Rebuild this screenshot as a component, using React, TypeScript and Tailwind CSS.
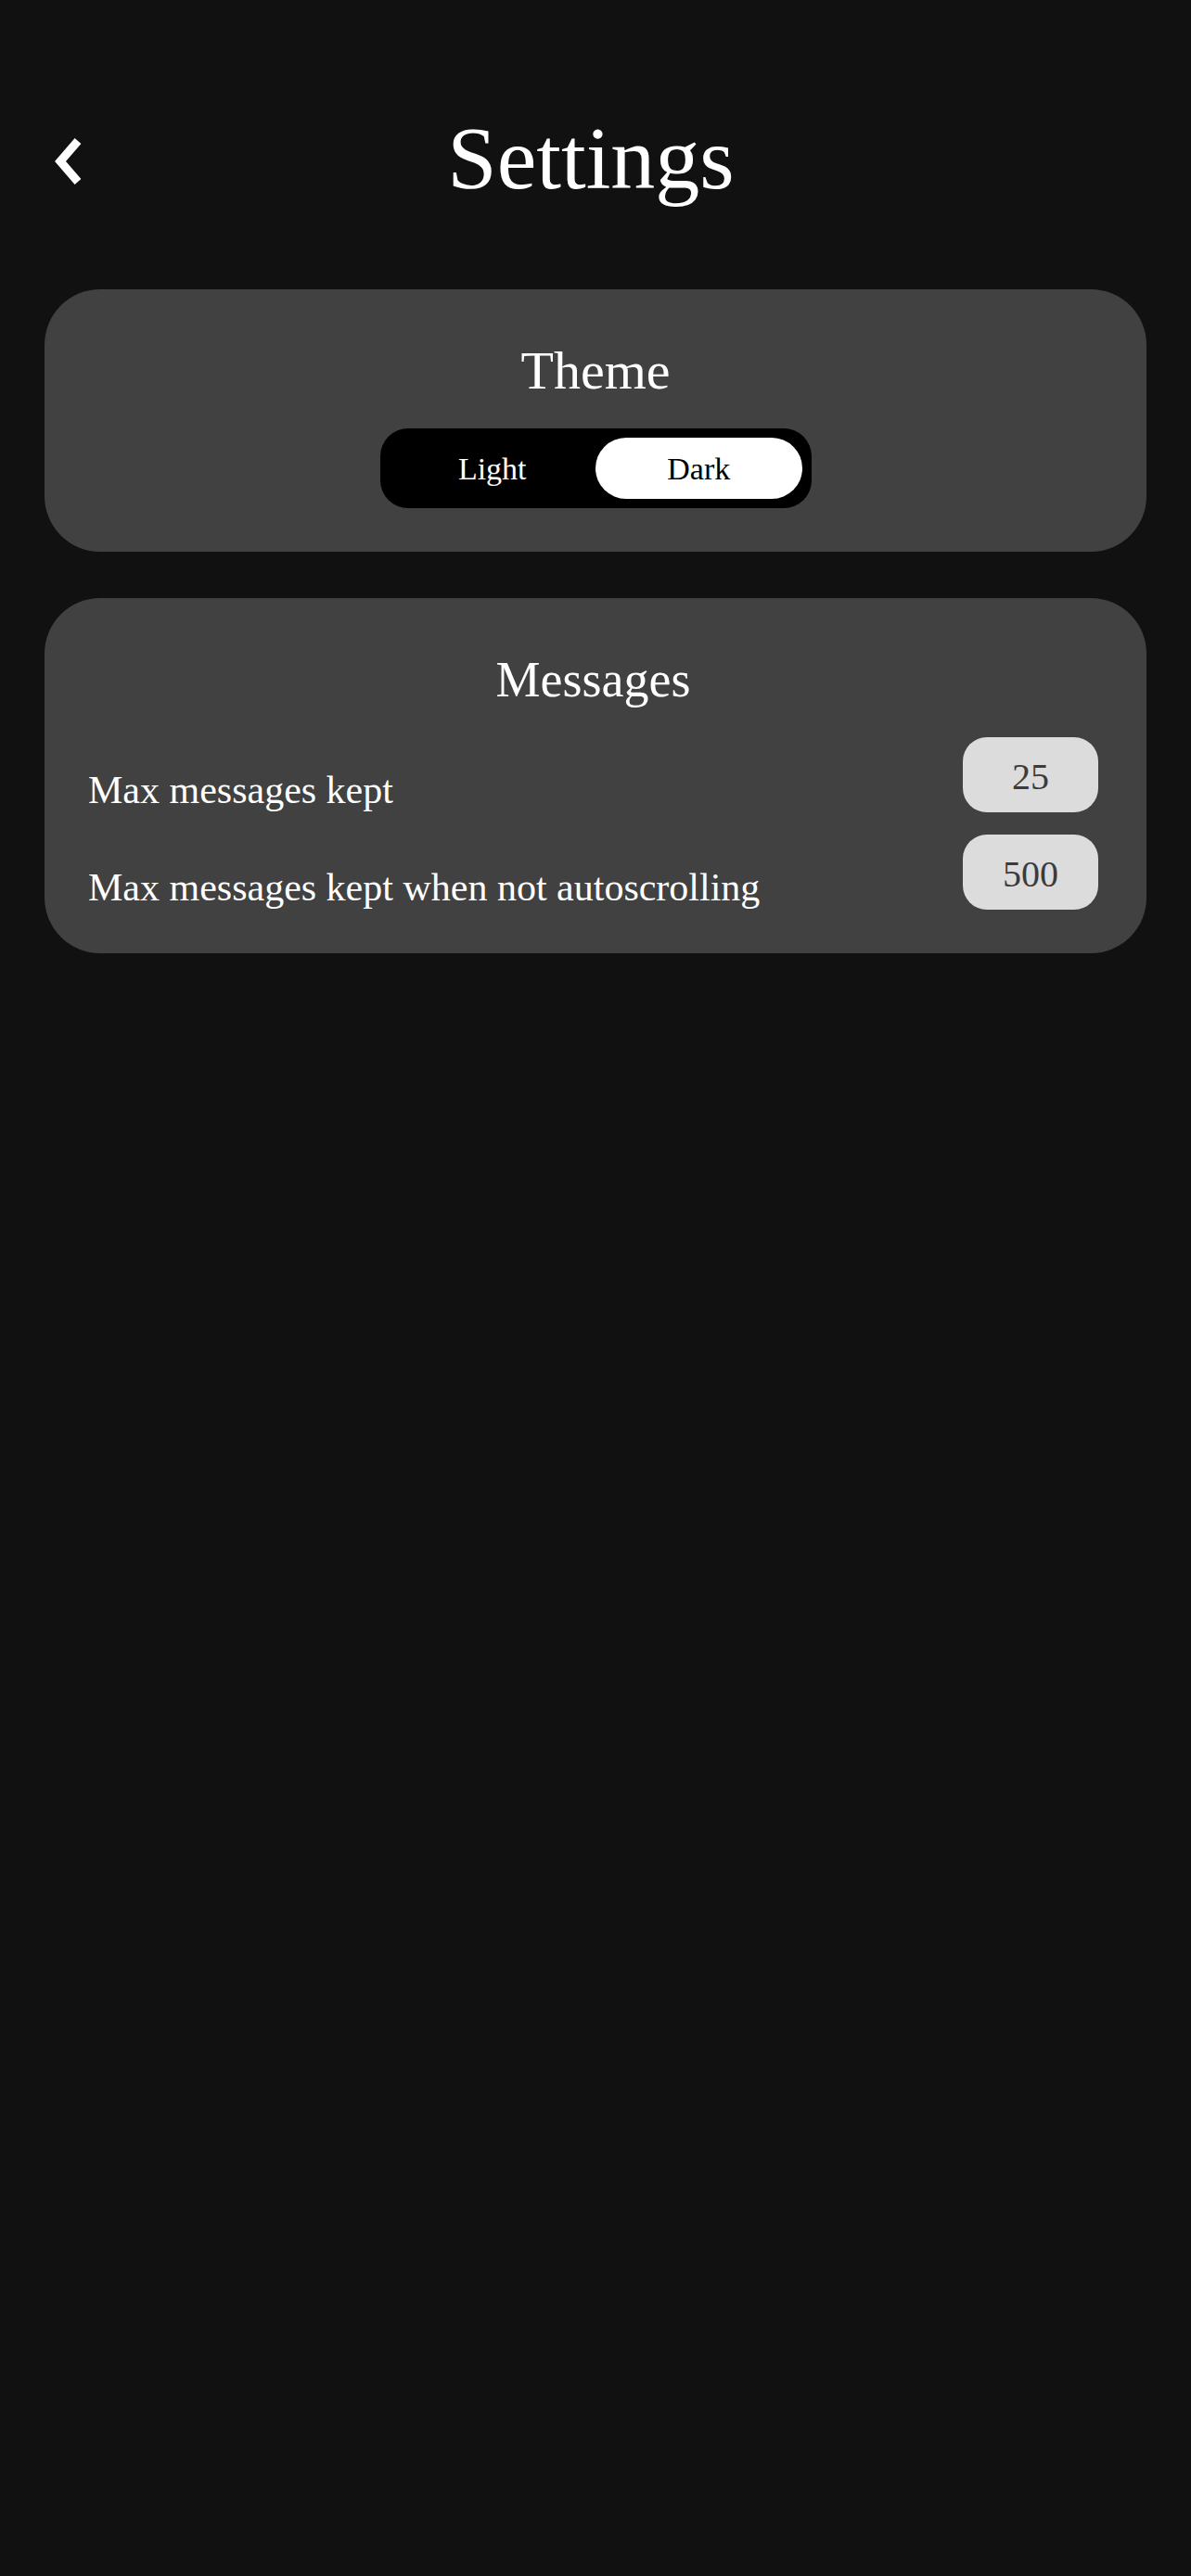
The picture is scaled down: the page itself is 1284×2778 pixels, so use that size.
import { useState } from 'react';

function BackChevron() {
  return (
    <svg width="36" height="56" viewBox="0 0 36 56" fill="none" aria-hidden="true">
      <polyline
        points="31,6 12,28 31,50"
        stroke="#ffffff"
        strokeWidth="9"
        strokeLinecap="butt"
        strokeLinejoin="miter"
      />
    </svg>
  );
}

function NumberRow({ label, value }: { label: string; value: string }) {
  return (
    <div className="flex items-end justify-between">
      <span className="text-[42px] leading-[48px] text-white">{label}</span>
      <div className="flex h-[81px] w-[146px] items-center justify-center rounded-[26px] bg-[#dcdcdc] pt-[4px] text-[40px] text-[#3b3b3b]">
        {value}
      </div>
    </div>
  );
}

export default function App() {
  const [theme, setTheme] = useState<'light' | 'dark'>('dark');

  return (
    <div className="min-h-screen bg-[#111111] font-['Liberation_Serif',serif] text-white">
      <header className="grid grid-cols-[1fr_auto_1fr] items-center pt-[123px]">
        <button className="mt-[6px] ml-[53px] flex w-fit items-center" aria-label="Back">
          <BackChevron />
        </button>
        <h1 className="mr-[10px] text-[96px] leading-[96px]">Settings</h1>
        <div />
      </header>

      <main className="mx-[48px] mt-[93px] flex flex-col gap-[50px]">
        <section className="flex flex-col items-center rounded-[60px] bg-[#414141] pt-[56px] pb-[47px]">
          <h2 className="text-[58px] leading-[64px]">Theme</h2>
          <div className="mt-[30px] flex h-[86px] w-[465px] rounded-[30px] bg-black p-[10px]">
            <button
              onClick={() => setTheme('light')}
              className={`flex-1 rounded-full text-[34px] ${
                theme === 'light' ? 'bg-white text-black' : 'text-white'
              }`}
            >
              Light
            </button>
            <button
              onClick={() => setTheme('dark')}
              className={`flex-1 rounded-full text-[34px] ${
                theme === 'dark' ? 'bg-white text-black' : 'text-white'
              }`}
            >
              Dark
            </button>
          </div>
        </section>

        <section className="flex flex-col rounded-[60px] bg-[#414141] pt-[56px] pr-[52px] pb-[47px] pl-[47px]">
          <h2 className="text-center text-[54px] leading-[64px]">Messages</h2>
          <div className="mt-[30px] flex flex-col gap-[24px]">
            <NumberRow label="Max messages kept" value="25" />
            <NumberRow label="Max messages kept when not autoscrolling" value="500" />
          </div>
        </section>
      </main>
    </div>
  );
}
